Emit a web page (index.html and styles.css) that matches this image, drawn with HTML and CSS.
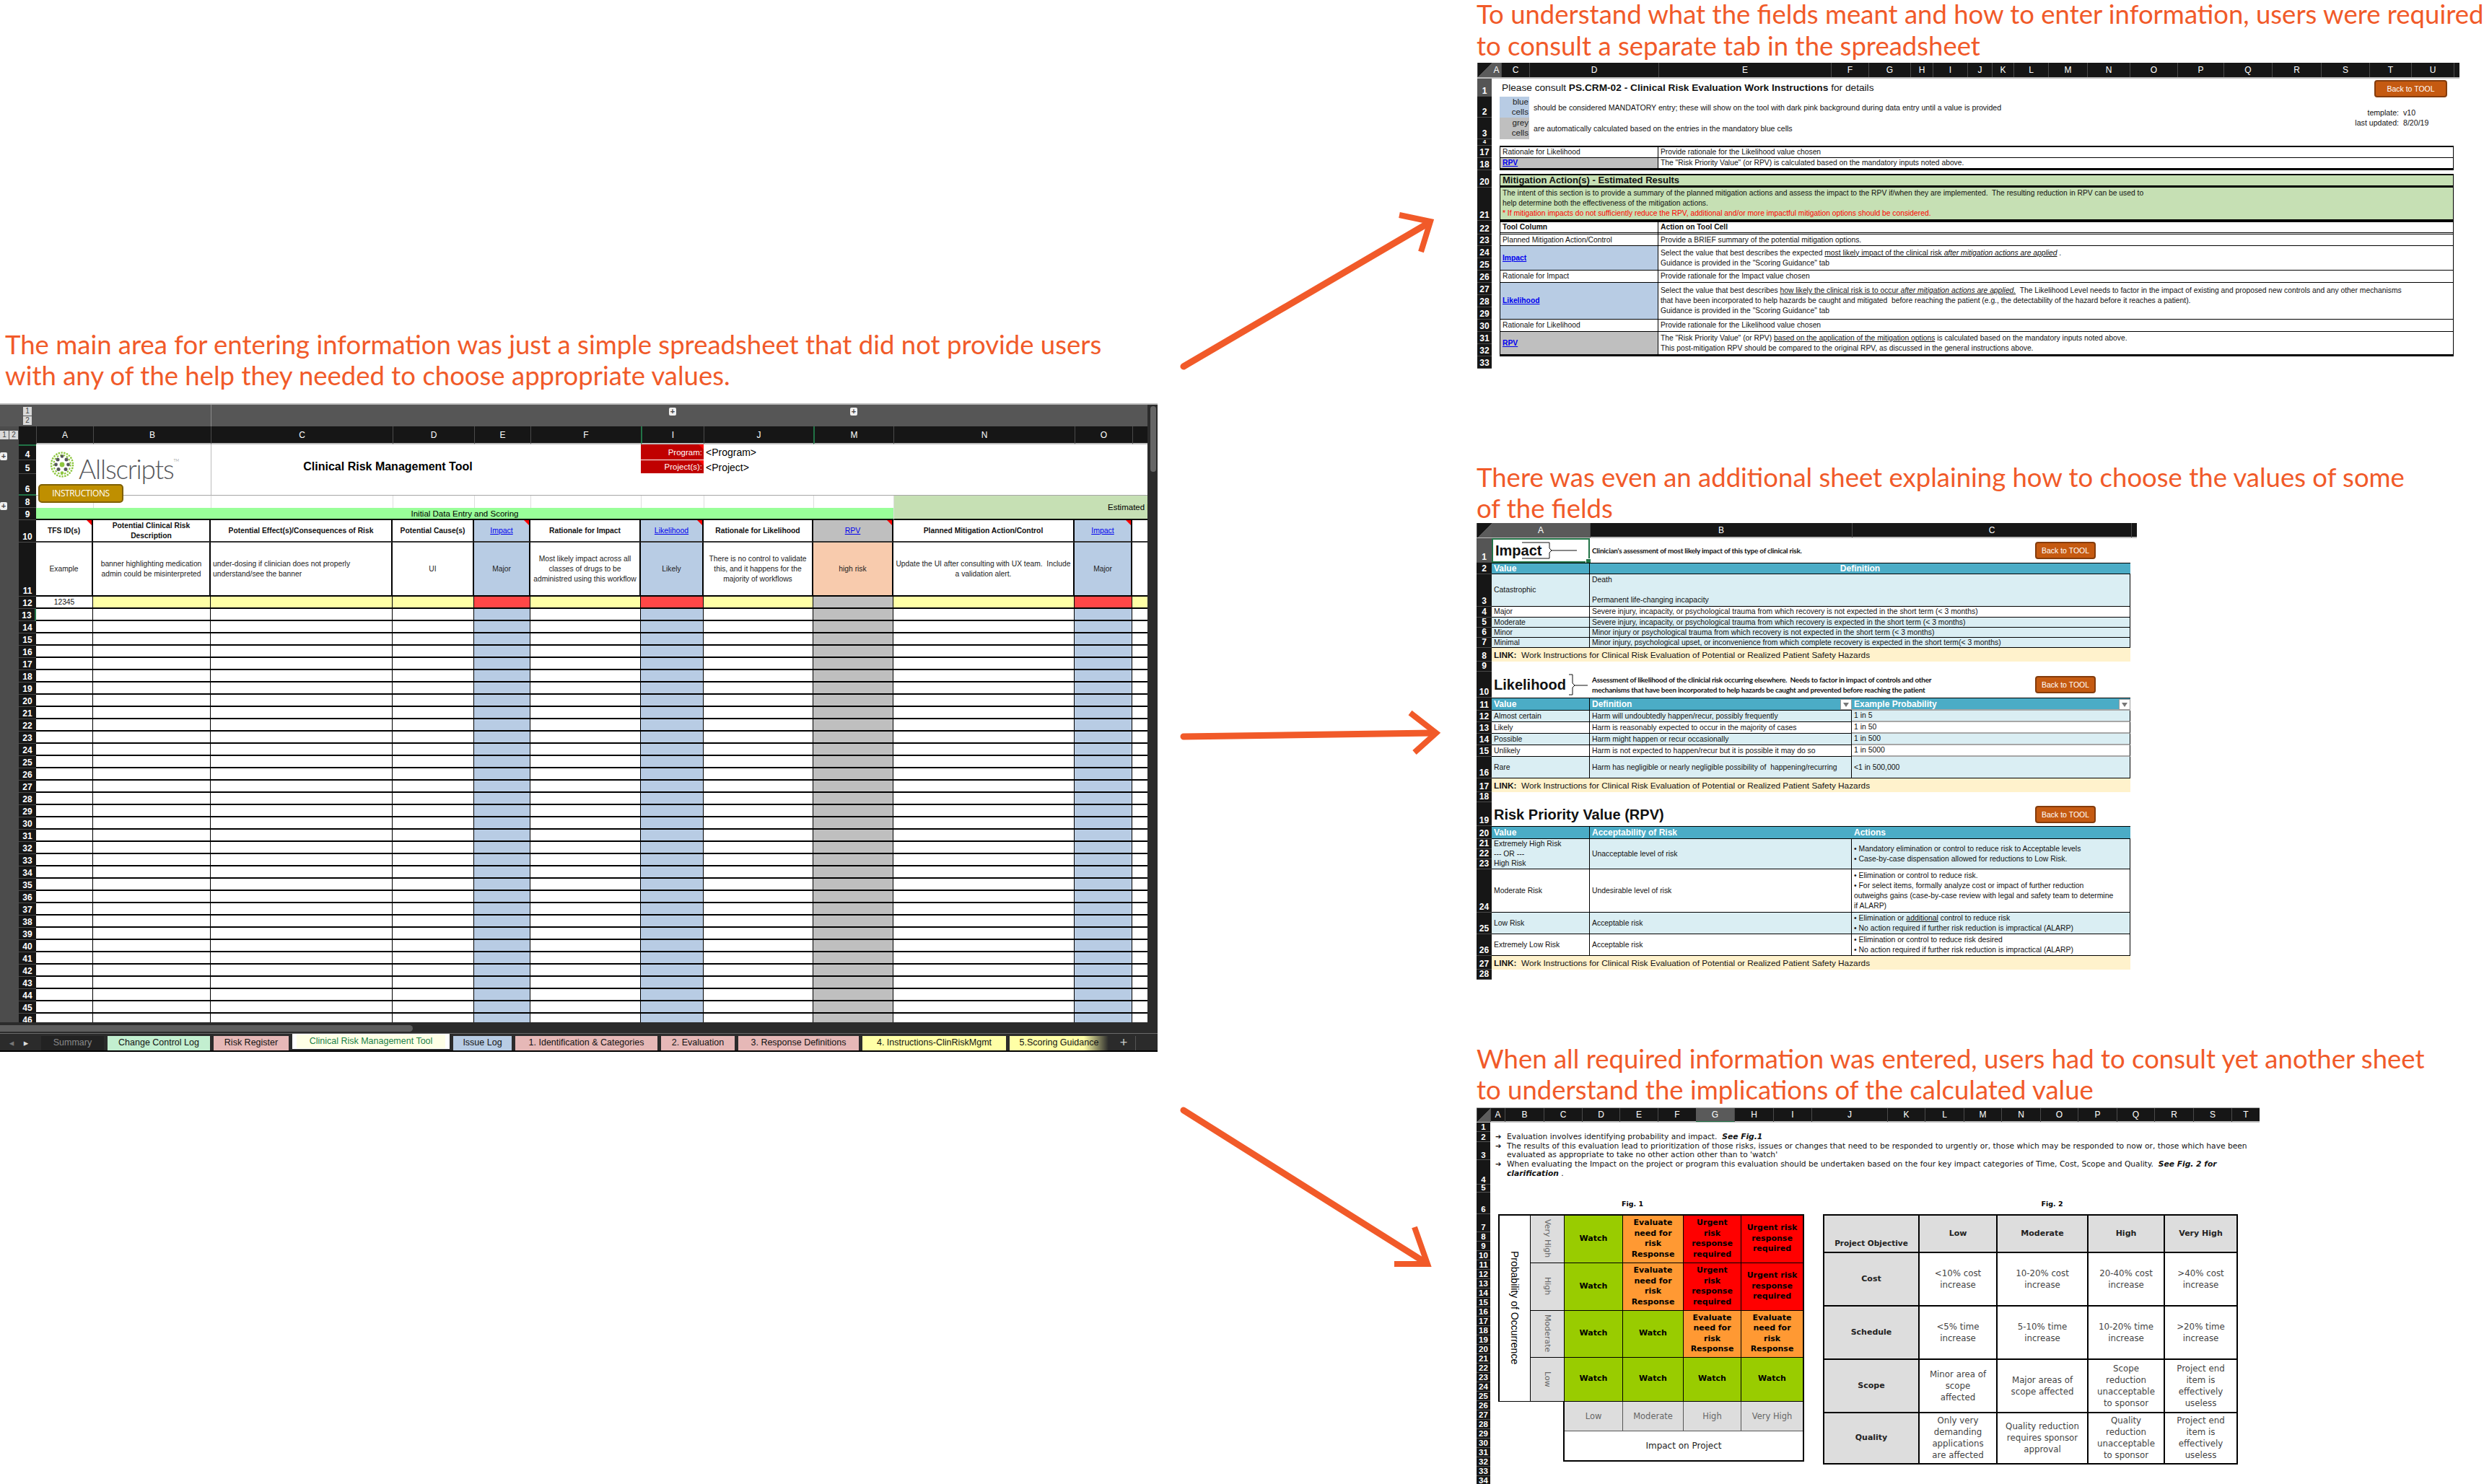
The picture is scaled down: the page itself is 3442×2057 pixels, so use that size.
FILE: index.html
```html
<!DOCTYPE html>
<html lang="en">
<head>
    <meta charset="UTF-8">
    <title>Clinical Risk Management Tool - spreadsheet review</title>
    <link rel="stylesheet" href="styles.css">
</head>
<body>
<div class="canvas">

    <p class="caption caption-main">The main area for entering information was just a simple spreadsheet that did not provide users<br>with any of the help they needed to choose appropriate values.</p>
    <p class="caption caption-work">To understand what the fields meant and how to enter information, users were required<br>to consult a separate tab in the spreadsheet</p>
    <p class="caption caption-impact">There was even an additional sheet explaining how to choose the values of some<br>of the fields</p>
    <p class="caption caption-eval">When all required information was entered, users had to consult yet another sheet<br>to understand the implications of the calculated value</p>

    <svg class="arrows" width="3442" height="2057" viewBox="0 0 3442 2057">
        <g fill="none" stroke="#f15a29">
            <path class="shaft" d="M1640 508 L1978 310"/>
            <path class="head" d="M1939 298 L1982 307 L1969 349"/>
            <path class="shaft" d="M1640 1021 L1985 1016"/>
            <path class="head" d="M1954 988 L1990 1016 L1960 1043"/>
            <path class="shaft" d="M1640 1539 L1972 1748"/>
            <path class="head" d="M1932 1752 L1978 1752 L1960 1701"/>
        </g>
    </svg>

    <!-- main entry sheet -->
    <div class="window">
        <div class="group-band">
            <div class="level-btns"><span>1</span><span>2</span></div>
            <span class="plus plus-i">+</span>
            <span class="plus plus-m">+</span>
        </div>
        <div class="vscroll"><span></span></div>
        <div class="window-body">
            <div class="outline">
                <div class="level-row"><span>1</span><span>2</span></div>
                <span class="plus plus-4">+</span>
                <span class="plus plus-8">+</span>
            </div>
            <div class="sheet-clip">
                <table class="xl main">
                    <colgroup>
                        <col class="m-num"><col class="m-a"><col class="m-b"><col class="m-c"><col class="m-d">
                        <col class="m-e blue"><col class="m-f"><col class="m-i blue"><col class="m-j">
                        <col class="m-m grey"><col class="m-n"><col class="m-o blue"><col class="m-p">
                    </colgroup>
                    <tr class="letters">
                        <th class="corner"></th><th>A</th><th>B</th><th>C</th><th>D</th><th>E</th><th>F</th>
                        <th class="hidden-before">I</th><th>J</th><th class="hidden-before">M</th><th>N</th><th>O</th><th></th>
                    </tr>
                    <tr class="r22 top">
                        <th class="green-top">4</th>
                        <td colspan="2" rowspan="3" class="logo-cell">
                            <div class="logo">
                                <svg width="34" height="36" viewBox="0 0 34 36">
                                    <g fill="none" stroke="#8dc63f">
                                        <ellipse cx="17" cy="18" rx="15" ry="16.5" stroke-width="2.4" stroke-dasharray="2.4 1.4"/>
                                        <ellipse cx="17" cy="18" rx="11.6" ry="13.2" stroke-width="2" stroke-dasharray="2.6 2"/>
                                    </g>
                                    <g fill="#55565a">
                                        <circle cx="11" cy="11" r="2.5"/><circle cx="23" cy="11" r="2.5"/>
                                        <circle cx="17" cy="6.5" r="2.2"/><circle cx="8.5" cy="18" r="2.4"/>
                                        <circle cx="25.5" cy="18" r="2.4"/><circle cx="12" cy="24.5" r="2.5"/>
                                        <circle cx="22" cy="24.5" r="2.5"/>
                                    </g>
                                    <circle cx="17" cy="18" r="3.4" fill="#8dc63f"/>
                                    <circle cx="17" cy="29.5" r="2.2" fill="#8dc63f"/>
                                </svg>
                                <span class="logo-name">Allscripts<sup>TM</sup></span>
                            </div>
                            <a class="instructions">INSTRUCTIONS</a>
                        </td>
                        <td colspan="4" rowspan="3" class="title-cell">Clinical Risk Management Tool</td>
                        <td class="prog note">Program:</td>
                        <td colspan="5" class="prog-val">&lt;Program&gt;</td>
                    </tr>
                    <tr class="r19 top">
                        <th>5</th>
                        <td class="prog note">Project(s):</td>
                        <td colspan="5" class="prog-val">&lt;Project&gt;</td>
                    </tr>
                    <tr class="r30 top">
                        <th class="green-bottom">6</th>
                        <td colspan="6" class="rule-bottom"></td>
                    </tr>
                    <tr class="top faint">
                        <th>8</th><td></td><td></td><td></td><td></td><td></td><td></td><td></td><td></td><td></td>
                        <td colspan="3" rowspan="2" class="estimated">Estimated Residual Risk Scoring</td>
                    </tr>
                    <tr class="top">
                        <th>9</th>
                        <td colspan="9" class="section">Initial Data Entry and Scoring</td>
                    </tr>
                    <tr class="r31 heads">
                        <th>10</th>
                        <td class="note">TFS ID(s)</td>
                        <td>Potential Clinical Risk Description</td>
                        <td>Potential Effect(s)/Consequences of Risk</td>
                        <td>Potential Cause(s)</td>
                        <td class="note"><a>Impact</a></td>
                        <td>Rationale for Impact</td>
                        <td class="note"><a>Likelihood</a></td>
                        <td>Rationale for Likelihood</td>
                        <td class="note"><a>RPV</a></td>
                        <td>Planned Mitigation Action/Control</td>
                        <td class="note"><a>Impact</a></td>
                        <td></td>
                    </tr>
                    <tr class="r75 example">
                        <th>11</th>
                        <td>Example</td>
                        <td>banner highlighting medication admin could be misinterpreted</td>
                        <td class="left">under-dosing if clinician does not properly<br>understand/see the banner</td>
                        <td>UI</td>
                        <td>Major</td>
                        <td>Most likely impact across all classes of drugs to be administred using this workflow</td>
                        <td>Likely</td>
                        <td>There is no control to validate this, and it happens for the majority of workflows</td>
                        <td class="peach">high risk</td>
                        <td>Update the UI after consulting with UX team.&nbsp; Include a validation alert.</td>
                        <td>Major</td>
                        <td>If it is still<br>likely to be<br>occurring</td>
                    </tr>
                    <tr class="entry">
                        <th>12</th>
                        <td class="plain">12345</td>
                        <td></td><td></td><td></td><td class="missing"></td><td></td><td class="missing"></td>
                        <td></td><td class="auto"></td><td></td><td class="missing"></td><td></td>
                    </tr>
                    <tr class="blank"><th class="green-right">13</th><td></td><td></td><td></td><td></td><td></td><td></td><td></td><td></td><td></td><td></td><td></td><td></td></tr>
                    <tr class="blank"><th>14</th><td></td><td></td><td></td><td></td><td></td><td></td><td></td><td></td><td></td><td></td><td></td><td></td></tr>
                    <tr class="blank"><th>15</th><td></td><td></td><td></td><td></td><td></td><td></td><td></td><td></td><td></td><td></td><td></td><td></td></tr>
                    <tr class="blank"><th>16</th><td></td><td></td><td></td><td></td><td></td><td></td><td></td><td></td><td></td><td></td><td></td><td></td></tr>
                    <tr class="blank"><th>17</th><td></td><td></td><td></td><td></td><td></td><td></td><td></td><td></td><td></td><td></td><td></td><td></td></tr>
                    <tr class="blank"><th>18</th><td></td><td></td><td></td><td></td><td></td><td></td><td></td><td></td><td></td><td></td><td></td><td></td></tr>
                    <tr class="blank"><th>19</th><td></td><td></td><td></td><td></td><td></td><td></td><td></td><td></td><td></td><td></td><td></td><td></td></tr>
                    <tr class="blank"><th>20</th><td></td><td></td><td></td><td></td><td></td><td></td><td></td><td></td><td></td><td></td><td></td><td></td></tr>
                    <tr class="blank"><th>21</th><td></td><td></td><td></td><td></td><td></td><td></td><td></td><td></td><td></td><td></td><td></td><td></td></tr>
                    <tr class="blank"><th>22</th><td></td><td></td><td></td><td></td><td></td><td></td><td></td><td></td><td></td><td></td><td></td><td></td></tr>
                    <tr class="blank"><th>23</th><td></td><td></td><td></td><td></td><td></td><td></td><td></td><td></td><td></td><td></td><td></td><td></td></tr>
                    <tr class="blank"><th>24</th><td></td><td></td><td></td><td></td><td></td><td></td><td></td><td></td><td></td><td></td><td></td><td></td></tr>
                    <tr class="blank"><th>25</th><td></td><td></td><td></td><td></td><td></td><td></td><td></td><td></td><td></td><td></td><td></td><td></td></tr>
                    <tr class="blank"><th>26</th><td></td><td></td><td></td><td></td><td></td><td></td><td></td><td></td><td></td><td></td><td></td><td></td></tr>
                    <tr class="blank"><th>27</th><td></td><td></td><td></td><td></td><td></td><td></td><td></td><td></td><td></td><td></td><td></td><td></td></tr>
                    <tr class="blank"><th>28</th><td></td><td></td><td></td><td></td><td></td><td></td><td></td><td></td><td></td><td></td><td></td><td></td></tr>
                    <tr class="blank"><th>29</th><td></td><td></td><td></td><td></td><td></td><td></td><td></td><td></td><td></td><td></td><td></td><td></td></tr>
                    <tr class="blank"><th>30</th><td></td><td></td><td></td><td></td><td></td><td></td><td></td><td></td><td></td><td></td><td></td><td></td></tr>
                    <tr class="blank"><th>31</th><td></td><td></td><td></td><td></td><td></td><td></td><td></td><td></td><td></td><td></td><td></td><td></td></tr>
                    <tr class="blank"><th>32</th><td></td><td></td><td></td><td></td><td></td><td></td><td></td><td></td><td></td><td></td><td></td><td></td></tr>
                    <tr class="blank"><th>33</th><td></td><td></td><td></td><td></td><td></td><td></td><td></td><td></td><td></td><td></td><td></td><td></td></tr>
                    <tr class="blank"><th>34</th><td></td><td></td><td></td><td></td><td></td><td></td><td></td><td></td><td></td><td></td><td></td><td></td></tr>
                    <tr class="blank"><th>35</th><td></td><td></td><td></td><td></td><td></td><td></td><td></td><td></td><td></td><td></td><td></td><td></td></tr>
                    <tr class="blank"><th>36</th><td></td><td></td><td></td><td></td><td></td><td></td><td></td><td></td><td></td><td></td><td></td><td></td></tr>
                    <tr class="blank"><th>37</th><td></td><td></td><td></td><td></td><td></td><td></td><td></td><td></td><td></td><td></td><td></td><td></td></tr>
                    <tr class="blank"><th>38</th><td></td><td></td><td></td><td></td><td></td><td></td><td></td><td></td><td></td><td></td><td></td><td></td></tr>
                    <tr class="blank"><th>39</th><td></td><td></td><td></td><td></td><td></td><td></td><td></td><td></td><td></td><td></td><td></td><td></td></tr>
                    <tr class="blank"><th>40</th><td></td><td></td><td></td><td></td><td></td><td></td><td></td><td></td><td></td><td></td><td></td><td></td></tr>
                    <tr class="blank"><th>41</th><td></td><td></td><td></td><td></td><td></td><td></td><td></td><td></td><td></td><td></td><td></td><td></td></tr>
                    <tr class="blank"><th>42</th><td></td><td></td><td></td><td></td><td></td><td></td><td></td><td></td><td></td><td></td><td></td><td></td></tr>
                    <tr class="blank"><th>43</th><td></td><td></td><td></td><td></td><td></td><td></td><td></td><td></td><td></td><td></td><td></td><td></td></tr>
                    <tr class="blank"><th>44</th><td></td><td></td><td></td><td></td><td></td><td></td><td></td><td></td><td></td><td></td><td></td><td></td></tr>
                    <tr class="blank"><th>45</th><td></td><td></td><td></td><td></td><td></td><td></td><td></td><td></td><td></td><td></td><td></td><td></td></tr>
                    <tr class="blank"><th>46</th><td></td><td></td><td></td><td></td><td></td><td></td><td></td><td></td><td></td><td></td><td></td><td></td></tr>
                </table>
            </div>
        </div>
        <div class="hscroll"><span></span></div>
        <div class="tabs">
            <div class="tab-nav"><span>&#9666;</span><span class="on">&#9656;</span></div>
            <div class="tab tab-off">Summary</div>
            <div class="tab tab-mint">Change Control Log</div>
            <div class="tab tab-rose">Risk Register</div>
            <div class="tab tab-active"><span>Clinical Risk Management Tool</span></div>
            <div class="tab tab-blue">Issue Log</div>
            <div class="tab tab-rose">1. Identification &amp; Categories</div>
            <div class="tab tab-rose">2. Evaluation</div>
            <div class="tab tab-rose">3. Response Definitions</div>
            <div class="tab tab-lemon">4. Instructions-ClinRiskMgmt</div>
            <div class="tab tab-lemon tab-fade">5.Scoring Guidance</div>
            <div class="tab-add">+</div>
        </div>
    </div>

    <!-- work instructions sheet -->
    <div class="panel panel-work">
        <div class="col-heads heads-work">
            <span class="corner"></span><span class="sel">A</span><span>C</span><span>D</span><span>E</span><span>F</span><span>G</span><span>H</span><span>I</span><span>J</span><span>K</span><span>L</span><span>M</span><span>N</span><span>O</span><span>P</span><span>Q</span><span>R</span><span>S</span><span>T</span><span>U</span><span></span>
        </div>
        <table class="xl work">
            <colgroup><col class="w-num"><col class="w-a"><col class="w-left"><col class="w-right"></colgroup>
            <tr class="r25">
                <th class="sel">1</th><td></td>
                <td colspan="2" class="consult">
                    <div class="between">
                        <span>Please consult <b>PS.CRM-02 - Clinical Risk Evaluation Work Instructions</b> for details</span>
                        <a class="back-btn back-work">Back to TOOL</a>
                    </div>
                </td>
            </tr>
            <tr class="r29">
                <th>2</th><td></td>
                <td colspan="2">
                    <div class="legend">
                        <span class="chip chip-blue">blue<br>cells</span>
                        <span>should be considered MANDATORY entry; these will show on the tool with dark pink background during data entry until a value is provided</span>
                        <span class="tmpl tmpl-a"><i>template:</i><i>v10</i></span>
                    </div>
                </td>
            </tr>
            <tr class="r30">
                <th>3</th><td></td>
                <td colspan="2">
                    <div class="legend">
                        <span class="chip chip-grey">grey<br>cells</span>
                        <span>are automatically calculated based on the entries in the mandatory blue cells</span>
                        <span class="tmpl tmpl-b"><i>last updated:</i><i>8/20/19</i></span>
                    </div>
                </td>
            </tr>
            <tr class="r9 small-num"><th>4</th><td></td><td colspan="2"></td></tr>
            <tr class="r16 boxed first"><th>17</th><td class="bare"></td><td>Rationale for Likelihood</td><td>Provide rationale for the Likelihood value chosen</td></tr>
            <tr class="r17 boxed last"><th>18</th><td class="bare"></td><td class="cell-grey"><a><b>RPV</b></a></td><td>The "Risk Priority Value" (or RPV) is calculated based on the mandatory inputs noted above.</td></tr>
            <tr class="r5"><th></th><td></td><td colspan="2"></td></tr>
            <tr class="r19 boxed first last"><th>20</th><td class="bare"></td><td colspan="2" class="sec-head">Mitigation Action(s) - Estimated Results</td></tr>
            <tr class="r46 boxed">
                <th>21</th><td class="bare"></td>
                <td colspan="2" class="sec-body">The intent of this section is to provide a summary of the planned mitigation actions and assess the impact to the RPV if/when they are implemented.&nbsp; The resulting reduction in RPV can be used to<br>help determine both the effectiveness of the mitigation actions.<br><span class="warn">* If mitigation impacts do not sufficiently reduce the RPV, additional and/or more impactful mitigation options should be considered.</span></td>
            </tr>
            <tr class="r16 boxed first double"><th>22</th><td class="bare"></td><td><b>Tool Column</b></td><td><b>Action on Tool Cell</b></td></tr>
            <tr class="r16 boxed"><th>23</th><td class="bare"></td><td>Planned Mitigation Action/Control</td><td>Provide a BRIEF summary of the potential mitigation options.</td></tr>
            <tr class="r17 boxed"><th>24</th><td class="bare"></td><td rowspan="2" class="cell-blue"><a><b>Impact</b></a></td><td rowspan="2">Select the value that best describes the expected <u>most likely impact of the clinical risk <em>after mitigation actions are applied</em></u> .<br>Guidance is provided in the "Scoring Guidance" tab</td></tr>
            <tr class="r17"><th>25</th><td class="bare"></td></tr>
            <tr class="r17 boxed"><th>26</th><td class="bare"></td><td>Rationale for Impact</td><td>Provide rationale for the Impact value chosen</td></tr>
            <tr class="r17 boxed"><th>27</th><td class="bare"></td><td rowspan="3" class="cell-blue"><a><b>Likelihood</b></a></td><td rowspan="3">Select the value that best describes <u>how likely the clinical risk is to occur <em>after mitigation actions are applied.</em></u>&nbsp; The Likelihood Level needs to factor in the impact of existing and proposed new controls and any other mechanisms<br>that have been incorporated to help hazards be caught and mitigated&nbsp; before reaching the patient (e.g., the detectability of the hazard before it reaches a patient).<br>Guidance is provided in the "Scoring Guidance" tab</td></tr>
            <tr class="r17"><th>28</th><td class="bare"></td></tr>
            <tr class="r17"><th>29</th><td class="bare"></td></tr>
            <tr class="r17 boxed"><th>30</th><td class="bare"></td><td>Rationale for Likelihood</td><td>Provide rationale for the Likelihood value chosen</td></tr>
            <tr class="r17 boxed last"><th>31</th><td class="bare"></td><td rowspan="2" class="cell-grey"><a><b>RPV</b></a></td><td rowspan="2">The "Risk Priority Value" (or RPV) <u>based on the application of the mitigation options</u> is calculated based on the mandatory inputs noted above.<br>This post-mitigation RPV should be compared to the original RPV, as discussed in the general instructions above.</td></tr>
            <tr class="r17"><th>32</th><td class="bare"></td></tr>
            <tr class="r17"><th>33</th><td></td><td colspan="2"></td></tr>
        </table>
    </div>

    <!-- scoring guidance sheet -->
    <div class="panel panel-impact">
        <div class="col-heads heads-impact">
            <span class="corner"></span><span class="sel">A</span><span>B</span><span>C</span><span></span>
        </div>
        <table class="xl impact">
            <colgroup><col class="i-num"><col class="i-a"><col class="i-b"><col class="i-c"></colgroup>
            <tr class="r34 open">
                <th class="sel">1</th>
                <td class="picked">
                    <div class="callout">
                        <span class="big">Impact</span>
                        <svg class="callout-impact" width="76" height="26" viewBox="0 0 76 26"><path d="M0 2 H38 V10 L41 13 H76 M41 13 L38 16 V24 H0" fill="none" stroke="#111" stroke-width="1"/></svg>
                    </div>
                </td>
                <td class="tight">Clinician's assessment of most likely impact of this type of clinical risk.</td>
                <td class="btn-cell"><a class="back-btn">Back to TOOL</a></td>
            </tr>
            <tr class="r16 teal"><th>2</th><td>Value</td><td colspan="2" class="center">Definition</td></tr>
            <tr class="r45 zebra"><th>3</th><td>Catastrophic</td><td colspan="2">Death<br><br>Permanent life-changing incapacity</td></tr>
            <tr class="r15 plain-row"><th>4</th><td>Major</td><td colspan="2">Severe injury, incapacity, or psychological trauma from which recovery is not expected in the short term (&lt; 3 months)</td></tr>
            <tr class="r14 zebra"><th>5</th><td>Moderate</td><td colspan="2">Severe injury, incapacity, or psychological trauma from which recovery is expected in the short term (&lt; 3 months)</td></tr>
            <tr class="r14 plain-row"><th>6</th><td>Minor</td><td colspan="2">Minor injury or psychological trauma from which recovery is not expected in the short term (&lt; 3 months)</td></tr>
            <tr class="r14 zebra"><th>7</th><td>Minimal</td><td colspan="2">Minor injury, psychological upset, or inconvenience from which complete recovery is expected in the short term(&lt; 3 months)</td></tr>
            <tr class="r19 link-row"><th>8</th><td colspan="3"><b>LINK:</b>&nbsp; Work Instructions for Clinical Risk Evaluation of Potential or Realized Patient Safety Hazards</td></tr>
            <tr class="r14 open"><th>9</th><td colspan="3"></td></tr>
            <tr class="r36 open">
                <th>10</th>
                <td>
                    <div class="callout">
                        <span class="big">Likelihood</span>
                        <svg width="26" height="30" viewBox="0 0 26 30"><path d="M0 1 H5 V13 L8 16 H26 M8 16 L5 19 V29 H0" fill="none" stroke="#111" stroke-width="1"/></svg>
                    </div>
                </td>
                <td class="tight">Assessment of likelihood of the clinicial risk occurring elsewhere.&nbsp; Needs to factor in impact of controls and other<br>mechanisms that have been incorporated to help hazards be caught and prevented before reaching the patient</td>
                <td class="btn-cell"><a class="back-btn">Back to TOOL</a></td>
            </tr>
            <tr class="r18 teal"><th>11</th><td>Value</td><td class="filtered">Definition<span class="filter"></span></td><td class="filtered soft">Example Probability<span class="filter"></span></td></tr>
            <tr class="r15 zebra"><th>12</th><td>Almost certain</td><td>Harm will undoubtedly happen/recur, possibly frequently</td><td class="soft">1 in 5</td></tr>
            <tr class="r16 plain-row"><th>13</th><td>Likely</td><td>Harm is reasonably expected to occur in the majority of cases</td><td class="soft">1 in 50</td></tr>
            <tr class="r16 zebra"><th>14</th><td>Possible</td><td>Harm might happen or recur occasionally</td><td class="soft">1 in 500</td></tr>
            <tr class="r15 plain-row"><th>15</th><td>Unlikely</td><td>Harm is not expected to happen/recur but it is possible it may do so</td><td class="soft">1 in 5000</td></tr>
            <tr class="r30 zebra"><th>16</th><td>Rare</td><td>Harm has negligible or nearly negligible possibility of&nbsp; happening/recurring</td><td>&lt;1 in 500,000</td></tr>
            <tr class="r19 link-row"><th>17</th><td colspan="3"><b>LINK:</b>&nbsp; Work Instructions for Clinical Risk Evaluation of Potential or Realized Patient Safety Hazards</td></tr>
            <tr class="r14 open"><th>18</th><td colspan="3"></td></tr>
            <tr class="r33 open">
                <th>19</th>
                <td colspan="2"><span class="big">Risk Priority Value (RPV)</span></td>
                <td class="btn-cell"><a class="back-btn">Back to TOOL</a></td>
            </tr>
            <tr class="r18 teal"><th>20</th><td>Value</td><td>Acceptability of Risk</td><td>Actions</td></tr>
            <tr class="r14 zebra"><th>21</th><td rowspan="3">Extremely High Risk<br>--- OR ---<br>High Risk</td><td rowspan="3">Unacceptable level of risk</td><td rowspan="3">&bull; Mandatory elimination or control to reduce risk to Acceptable levels<br>&bull; Case-by-case dispensation allowed for reductions to Low Risk.</td></tr>
            <tr class="r14"><th>22</th></tr>
            <tr class="r14"><th>23</th></tr>
            <tr class="r60 plain-row"><th>24</th><td>Moderate Risk</td><td>Undesirable level of risk</td><td>&bull; Elimination or control to reduce risk.<br>&bull; For select items, formally analyze cost or impact of further reduction<br>outweighs gains (case-by-case review with legal and safety team to determine<br>if ALARP)</td></tr>
            <tr class="r30 zebra"><th>25</th><td>Low Risk</td><td>Acceptable risk</td><td>&bull; Elimination or <u>additional</u> control to reduce risk<br>&bull; No action required if further risk reduction is impractical (ALARP)</td></tr>
            <tr class="r30 plain-row"><th>26</th><td>Extremely Low Risk</td><td>Acceptable risk</td><td>&bull; Elimination or control to reduce risk desired<br>&bull; No action required if further risk reduction is impractical (ALARP)</td></tr>
            <tr class="r19 link-row"><th>27</th><td colspan="3"><b>LINK:</b>&nbsp; Work Instructions for Clinical Risk Evaluation of Potential or Realized Patient Safety Hazards</td></tr>
            <tr class="r14 open"><th>28</th><td colspan="3"></td></tr>
        </table>
    </div>

    <!-- evaluation sheet -->
    <div class="panel panel-eval">
        <div class="col-heads heads-eval">
            <span class="corner"></span><span>A</span><span>B</span><span>C</span><span>D</span><span>E</span><span>F</span><span class="sel">G</span><span>H</span><span>I</span><span>J</span><span>K</span><span>L</span><span>M</span><span>N</span><span>O</span><span>P</span><span>Q</span><span>R</span><span>S</span><span>T</span>
        </div>
        <div class="eval-body">
            <div class="eval-nums">
                <span class="n13">1</span><span class="n14">2</span><span class="n25">3</span><span class="n34">4</span><span class="n11">5</span><span class="n30">6</span><span class="n25">7</span>
                <span>8</span><span>9</span><span>10</span><span>11</span><span>12</span><span>13</span><span>14</span><span>15</span><span>16</span><span>17</span><span>18</span><span>19</span><span>20</span><span>21</span><span>22</span><span>23</span><span>24</span><span>25</span><span>26</span><span>27</span><span>28</span><span>29</span><span>30</span><span>31</span><span>32</span><span>33</span><span>34</span>
            </div>
            <div class="eval-content">
                <ul class="bullets">
                    <li>Evaluation involves identifying probability and impact.&nbsp; <b><em>See Fig.1</em></b></li>
                    <li>The results of this evaluation lead to prioritization of those risks, issues or changes that need to be responded to urgently or, those which may be responded to now or, those which have been<br>evaluated as appropriate to take no other action other than to 'watch'</li>
                    <li>When evaluating the Impact on the project or program this evaluation should be undertaken based on the four key impact categories of Time, Cost, Scope and Quality.&nbsp; <b><em>See Fig. 2 for<br>clarification</em></b> .</li>
                </ul>
                <div class="figures">
                    <div class="figure">
                        <div class="fig-title fig-title-1">Fig. 1</div>
                        <div class="risk-top">
                            <div class="prob-side"><span>Probability of Occurrence</span></div>
                            <div class="prob-label"><span>Very High</span></div>
                            <div class="cell-watch">Watch</div>
                            <div class="cell-eval">Evaluate need for risk Response</div>
                            <div class="cell-urgent">Urgent<br>risk<br>response<br>required</div>
                            <div class="cell-urgent">Urgent risk<br>response<br>required</div>
                            <div class="prob-label"><span>High</span></div>
                            <div class="cell-watch">Watch</div>
                            <div class="cell-eval">Evaluate need for risk Response</div>
                            <div class="cell-urgent">Urgent<br>risk<br>response<br>required</div>
                            <div class="cell-urgent">Urgent risk<br>response<br>required</div>
                            <div class="prob-label"><span>Moderate</span></div>
                            <div class="cell-watch">Watch</div>
                            <div class="cell-watch">Watch</div>
                            <div class="cell-eval">Evaluate need for risk Response</div>
                            <div class="cell-eval">Evaluate need for risk Response</div>
                            <div class="prob-label"><span>Low</span></div>
                            <div class="cell-watch">Watch</div>
                            <div class="cell-watch">Watch</div>
                            <div class="cell-watch">Watch</div>
                            <div class="cell-watch">Watch</div>
                        </div>
                        <div class="risk-bottom">
                            <div>Low</div><div>Moderate</div><div>High</div><div>Very High</div>
                            <div class="impact-axis">Impact on Project</div>
                        </div>
                    </div>
                    <div class="figure">
                        <div class="fig-title fig-title-2">Fig. 2</div>
                        <div class="objectives">
                            <div class="obj-corner">Project Objective</div>
                            <div class="obj-head">Low</div><div class="obj-head">Moderate</div><div class="obj-head">High</div><div class="obj-head">Very High</div>
                            <div class="obj-name">Cost</div>
                            <div>&lt;10% cost<br>increase</div><div>10-20% cost<br>increase</div><div>20-40% cost<br>increase</div><div>&gt;40% cost<br>increase</div>
                            <div class="obj-name">Schedule</div>
                            <div>&lt;5% time<br>increase</div><div>5-10% time<br>increase</div><div>10-20% time<br>increase</div><div>&gt;20% time<br>increase</div>
                            <div class="obj-name">Scope</div>
                            <div>Minor area of<br>scope<br>affected</div><div>Major areas of<br>scope affected</div><div>Scope<br>reduction<br>unacceptable<br>to sponsor</div><div>Project end<br>item is<br>effectively<br>useless</div>
                            <div class="obj-name">Quality</div>
                            <div>Only very<br>demanding<br>applications<br>are affected</div><div>Quality reduction<br>requires sponsor<br>approval</div><div>Quality<br>reduction<br>unacceptable<br>to sponsor</div><div>Project end<br>item is<br>effectively<br>useless</div>
                        </div>
                    </div>
                </div>
            </div>
        </div>
    </div>

</div>
</body>
</html>
```

FILE: styles.css
```css
* {
    box-sizing: border-box;
    margin: 0;
    padding: 0;
}

body {
    background: #fff;
    font-family: "Liberation Sans", Arial, sans-serif;
}

.canvas {
    position: relative;
    width: 3442px;
    height: 2057px;
    overflow: hidden;
}

/* captions and arrows */
.caption {
    position: absolute;
    font-family: Lato, "Open Sans", sans-serif;
    font-size: 36.5px;
    line-height: 43px;
    color: #f15a29;
    white-space: nowrap;
}

.caption-main { left: 7px; top: 456px; }
.caption-work { left: 2046px; top: -3px; line-height: 44px; }
.caption-impact { left: 2046px; top: 640px; }
.caption-eval { left: 2046px; top: 1446px; }

.arrows {
    position: absolute;
    left: 0;
    top: 0;
}

.shaft {
    stroke-width: 9;
    stroke-linecap: round;
}

.head {
    stroke-width: 8;
    stroke-linejoin: miter;
}

/* shared spreadsheet table */
.xl {
    border-collapse: separate;
    border-spacing: 0;
    table-layout: fixed;
    font-size: 10.3px;
    line-height: 14px;
    color: #111;
}

.xl td,
.xl th {
    padding: 0;
    height: 17px;
    vertical-align: middle;
}

.xl th {
    background: #161616;
    color: #fff;
    font-size: 12px;
    font-weight: 700;
    line-height: 13px;
    text-align: center;
    vertical-align: bottom;
    border-bottom: 1px solid #4a4a4a;
    overflow: hidden;
}

.xl th.sel { background: #555; }

.xl a {
    color: #0000ee;
    text-decoration: underline;
}

.r5 td, .r5 th { height: 5px; font-size: 0; line-height: 0; border-bottom: 0; }
.r9 td, .r9 th { height: 9px; }
.r14 td, .r14 th { height: 14px; }
.r15 td, .r15 th { height: 15px; }
.r16 td, .r16 th { height: 16px; }
.r17 td, .r17 th { height: 17px; }
.r18 td, .r18 th { height: 18px; }
.r19 td, .r19 th { height: 19px; }
.r22 td, .r22 th { height: 22px; }
.r25 td, .r25 th { height: 25px; }
.r29 td, .r29 th { height: 29px; }
.r30 td, .r30 th { height: 30px; }
.r31 td, .r31 th { height: 31px; }
.r33 td, .r33 th { height: 33px; }
.r34 td, .r34 th { height: 34px; }
.r36 td, .r36 th { height: 36px; }
.r45 td, .r45 th { height: 45px; }
.r46 td, .r46 th { height: 46px; }
.r60 td, .r60 th { height: 60px; }
.r75 td, .r75 th { height: 75px; }

.small-num th { font-size: 8px; line-height: 8px; }

.panel {
    position: absolute;
}

.col-heads {
    display: grid;
    height: 22px;
    background: #161616;
    border-bottom: 2px solid #bdbdbd;
    color: #fff;
    font-size: 12px;
    line-height: 20px;
    text-align: center;
}

.col-heads span {
    border-left: 1px solid #4a4a4a;
}

.col-heads .sel {
    background: #5a5a5a;
    border-left: 0;
}

.corner {
    background: linear-gradient(135deg, #161616 50%, #5c5c5c 50%);
}

/* main window */
.window {
    position: absolute;
    left: 0;
    top: 559px;
    width: 1604px;
    height: 899px;
    background: #2b2b2b;
    border-top: 2px solid #bcbcbc;
    border-bottom: 2px solid #000;
    display: flex;
    flex-direction: column;
}

.group-band {
    position: relative;
    height: 30px;
    background: #565656;
    flex: none;
    background-image: linear-gradient(#8a8a8a, #8a8a8a);
    background-size: 1px 30px;
    background-position: 292px 0;
    background-repeat: no-repeat;
}

.level-btns {
    position: absolute;
    left: 32px;
    top: 3px;
    display: flex;
    flex-direction: column;
    gap: 1px;
}

.level-btns span,
.level-row span {
    display: block;
    width: 12px;
    height: 12px;
    background: #d9d9d9;
    color: #444;
    font-size: 10px;
    line-height: 12px;
    text-align: center;
}

.plus {
    position: absolute;
    width: 10px;
    height: 11px;
    background: #efefef;
    border-radius: 2px;
    color: #444;
    font-size: 11px;
    font-weight: 700;
    line-height: 10px;
    text-align: center;
}

.plus-i { left: 927px; top: 4px; }
.plus-m { left: 1178px; top: 4px; }

.vscroll {
    position: absolute;
    right: 0;
    top: 0;
    width: 14px;
    height: 856px;
    background: #2b2b2b;
}

.vscroll span {
    position: absolute;
    left: 4px;
    top: 2px;
    width: 8px;
    height: 91px;
    background: #666;
    border-radius: 4px;
}

.window-body {
    display: flex;
    height: 826px;
    flex: none;
}

.outline {
    position: relative;
    width: 26px;
    background: #4c4c4c;
    flex: none;
}

.level-row {
    position: absolute;
    left: 0;
    top: 6px;
    display: flex;
    gap: 1px;
}

.plus-4 { left: 0; top: 36px; }
.plus-8 { left: 0; top: 105px; }

.sheet-clip {
    width: 1564px;
    height: 826px;
    overflow: hidden;
    background: #fff;
}

.main {
    width: 1644px;
}

.m-num { width: 24px; }
.m-a { width: 79px; }
.m-b { width: 163px; }
.m-c { width: 252px; }
.m-d { width: 113px; }
.m-e { width: 78px; }
.m-f { width: 153px; }
.m-i { width: 87px; }
.m-j { width: 152px; }
.m-m { width: 111px; }
.m-n { width: 251px; }
.m-o { width: 80px; }
.m-p { width: 101px; }

.letters th {
    height: 25px;
    font-weight: 400;
    line-height: 22px;
    vertical-align: middle;
    border-left: 1px solid #4a4a4a;
    border-bottom: 2px solid #bdbdbd;
}

.letters th.corner {
    border-left: 0;
    border-bottom-color: #161616;
}

.letters .hidden-before {
    border-left: 2px solid #217346;
}

.green-top { border-top: 2px solid #217346; }
.xl th.green-bottom { border-bottom: 2px solid #217346; }
.green-right { border-right: 2px solid #217346; }

.top td {
    background: #fff;
    color: #000;
    vertical-align: middle;
}

.logo-cell {
    position: relative;
    vertical-align: top !important;
    border-bottom: 1px solid #a5a5a5;
}

.logo {
    display: flex;
    align-items: center;
    gap: 6px;
    margin: 10px 0 0 19px;
    height: 36px;
    color: #55565a;
}

.logo-name {
    font-family: Lato, "Open Sans", sans-serif;
    font-size: 37px;
    font-weight: 300;
    line-height: 36px;
    letter-spacing: -1.2px;
    white-space: nowrap;
}

.logo-name sup {
    font-size: 5px;
    letter-spacing: 0;
    vertical-align: 24px;
}

.instructions {
    position: absolute;
    left: 3px;
    top: 55px;
    z-index: 2;
    width: 118px;
    height: 26px;
    background: #bf8f00;
    border: 2px solid #7f6000;
    border-radius: 5px;
    color: #fff !important;
    font-family: "Open Sans", sans-serif;
    font-size: 12px;
    line-height: 22px;
    text-align: center;
    text-decoration: none !important;
    letter-spacing: -0.4px;
}

.title-cell {
    padding: 0 106px 8px 0 !important;
    border-bottom: 1px solid #a5a5a5;
    border-left: 1px solid #bcbcbc;
    font-size: 16px;
    font-weight: 700;
    text-align: center;
}

.prog {
    position: relative;
    background: #c00000 !important;
    border-bottom: 1px solid #fff;
    color: #fff !important;
    font-size: 11.5px;
    text-align: right;
    padding-right: 2px !important;
}

.prog-val {
    padding-left: 3px !important;
    font-size: 14px;
    white-space: nowrap;
}

.rule-bottom { border-bottom: 1px solid #a5a5a5; }

.faint td { border-left: 1px solid #ddd; }

.estimated {
    background: #c6e0b4 !important;
    border-bottom: 2px solid #000;
    font-size: 11.5px;
    padding-left: 296px !important;
    white-space: nowrap;
}

.section {
    background: #99ff99 !important;
    border-bottom: 2px solid #000;
    font-size: 11.5px;
    text-align: center;
}

.heads td {
    position: relative;
    padding: 0 4px;
    background: none;
    border-right: 2px solid #000;
    border-bottom: 2px solid #333;
    font-weight: 700;
    text-align: center;
}

.heads td:has(a) { font-weight: 400; }

.heads a { font-size: 10.5px; }

.example td {
    padding: 0 3px;
    border-right: 2px solid #000;
    border-bottom: 2px solid #000;
    text-align: center;
    color: #222;
}

.example td.left { text-align: left; }
.example td.peach { background: #f8cbad; }

.note::after {
    content: "";
    position: absolute;
    right: 0;
    top: 0;
    border-top: 7px solid #f00;
    border-left: 7px solid transparent;
}

.blue { background: #b8cce4; }
.grey { background: #bfbfbf; }

.entry td {
    background: #ffffa6;
    border-right: 1px solid #000;
    border-bottom: 2px solid #000;
}

.entry td.plain { background: #fff; text-align: center; }
.entry td.missing { background: #ff4747; }
.entry td.auto { background: #bfbfbf; }

.blank td {
    border-right: 1px solid #000;
    border-bottom: 2px solid #000;
}

.main col:not(.blue):not(.grey) { background: #fff; }

.hscroll {
    position: relative;
    height: 15px;
    flex: none;
}

.hscroll span {
    position: absolute;
    left: 0;
    top: 4px;
    width: 572px;
    height: 9px;
    background: #5e5e5e;
    border-radius: 0 5px 5px 0;
}

.tabs {
    flex: 1;
    display: grid;
    grid-template-columns: 52px 87px 142px 104px 218px 81px 197px 102px 167px 199px 137px 33px;
    gap: 5px;
    padding-top: 3px;
    border-top: 1px solid #6a6a6a;
    background: #2b2b2b;
    font-size: 12.5px;
    line-height: 19px;
    color: #111;
    text-align: center;
}

.tab { height: 20px; white-space: nowrap; overflow: hidden; }

.tab-nav {
    display: flex;
    justify-content: space-around;
    padding: 0 6px;
    color: #777;
    font-family: "DejaVu Sans", sans-serif;
    font-size: 13px;
}

.tab-nav .on { color: #ddd; }

.tab-off { background: #222; color: #8a8a8a; margin-left: 0; }
.tab-mint { background: #c3efd0; }
.tab-rose { background: #e6b8b7; }
.tab-blue { background: #b8cce4; }
.tab-lemon { background: #ffffa6; }
.tab-fade { background: linear-gradient(90deg, #ffffa6 75%, #2b2b2b 100%); }

.tab-active {
    height: 21px;
    margin-top: -3px;
    padding: 1px 6px 0;
    background: #fff;
    color: #1a7f46;
}

.tab-active span {
    display: block;
    background: #ffffe6;
}

.tab-add {
    color: #ccc;
    font-size: 18px;
    border-right: 1px solid #555;
}

/* buttons */
.back-btn {
    display: block;
    width: 84px;
    height: 24px;
    background: #c55a11;
    border: 2px solid #843c0c;
    border-radius: 4px;
    color: #fff !important;
    font-size: 10.5px;
    line-height: 20px;
    text-align: center;
    text-decoration: none !important;
    white-space: nowrap;
}

/* work instructions sheet */
.panel-work {
    left: 2047px;
    top: 87px;
    width: 1361px;
}

.heads-work {
    grid-template-columns: 20px 13px 39px 179px 239px 52px 58px 31px 48px 34px 30px 48px 54px 59px 66px 64px 67px 68px 67px 58px 59px 8px;
}

.work { width: 1353px; }
.w-num { width: 20px; }
.w-a { width: 11px; }
.w-left { width: 220px; }
.w-right { width: 1102px; }

.consult { font-size: 13.7px; padding-left: 3px !important; }

.between {
    display: flex;
    justify-content: space-between;
    align-items: center;
    height: 25px;
}

.back-work {
    width: 101px;
    margin: 3px 9px 0 0;
    position: relative;
    z-index: 1;
}

.legend {
    display: flex;
    align-items: center;
    gap: 6px;
    height: 100%;
    font-size: 10.6px;
    white-space: nowrap;
}

.chip {
    width: 41px;
    height: 29px;
    padding-right: 1px;
    color: #222;
    font-size: 11.6px;
    text-align: right;
}

.chip-blue { background: #b8cce4; }
.chip-grey { background: #bfbfbf; height: 30px; }

.tmpl {
    display: grid;
    grid-template-columns: 100px 50px;
    gap: 6px;
    margin-left: auto;
    margin-right: 20px;
}

.tmpl i { font-style: normal; }
.tmpl i:first-child { text-align: right; }
.tmpl-a { align-self: flex-end; }
.tmpl-b { align-self: flex-start; }

.boxed td:not(.bare) {
    padding: 0 3px;
    border-right: 1px solid #000;
    border-bottom: 1px solid #000;
}

.boxed td:nth-child(3) { border-left: 1px solid #000; }

.boxed td[colspan] { border-left: 1px solid #000; }

.first td:not(.bare) { border-top: 2px solid #000; }
.last td:not(.bare) { border-bottom: 3px solid #000; }
.double td:not(.bare) { border-bottom: 3px double #000; }

.cell-grey { background: #bfbfbf; }
.cell-blue { background: #b8cce4; }

.sec-head {
    background: #c6e0b4;
    font-size: 13px;
    font-weight: 700;
}

.sec-body {
    background: #c6e0b4;
    border-bottom: 2px solid #000 !important;
}

.warn { color: #f00; }

/* scoring guidance sheet */
.panel-impact {
    left: 2046px;
    top: 725px;
    width: 915px;
}

.heads-impact {
    grid-template-columns: 21px 136px 363px 387px 8px;
    height: 21px;
}

.impact { width: 906px; }
.i-num { width: 21px; }
.i-a { width: 136px; }
.i-b { width: 363px; }
.i-c { width: 386px; }

.impact td {
    padding: 0 3px;
    font-size: 10.4px;
    white-space: normal;
}

.impact .r14 td { line-height: 13px; }
.impact .r14 td[rowspan] { line-height: 13.6px; }

.big {
    font-size: 20px;
    font-weight: 700;
    line-height: 24px;
    white-space: nowrap;
}

.callout {
    display: flex;
    align-items: center;
    gap: 4px;
    white-space: nowrap;
}

.callout-impact {
    margin-left: -31px;
}

.picked {
    position: relative;
    border: 2px solid #217346;
}

.picked::after {
    content: "";
    position: absolute;
    right: -4px;
    bottom: -4px;
    width: 6px;
    height: 6px;
    background: #217346;
    border: 1px solid #fff;
}

/* this text is set tighter in the sheet than the cells around it */
.impact .tight {
    font-family: Lato, "Open Sans", sans-serif;
    font-size: 10px;
    font-weight: 700;
    letter-spacing: -0.25px;
    white-space: nowrap;
}

.impact .btn-cell {
    padding-left: 254px;
    vertical-align: middle;
}

.impact .teal td {
    position: relative;
    background: #4bacc6;
    border-top: 1px solid #000;
    border-bottom: 1px solid #000;
    color: #fff;
    font-size: 12px;
    font-weight: 700;
}

.impact .teal td:nth-child(2) { border-right: 1px solid #000; }

.center { text-align: center; }

.filter {
    position: absolute;
    right: 0;
    top: 1px;
    width: 16px;
    height: 15px;
    background: #fff;
    border: 1px solid #999;
}

.filter::after {
    content: "";
    position: absolute;
    left: 3px;
    top: 4px;
    border-top: 6px solid #777;
    border-left: 4px solid transparent;
    border-right: 4px solid transparent;
}

.zebra td,
.zebra + .r14 td { background: #daeef3; }

.zebra td,
.plain-row td {
    border-right: 1px solid #000;
    border-bottom: 1px solid #000;
}

.impact td.soft {
    border-bottom: 2px solid #a6a6a6;
}

.impact .link-row td {
    background: #fff2cc;
    font-size: 11.8px;
    white-space: nowrap;
}

/* evaluation sheet */
.panel-eval {
    left: 2046px;
    top: 1535px;
    width: 1085px;
}

.heads-eval {
    grid-template-columns: 19px 20px 54px 53px 52px 53px 53px 53px 54px 53px 105px 52px 54px 52px 54px 52px 54px 52px 54px 53px 39px;
    height: 21px;
    border-top: 1px solid #aaa;
    line-height: 18px;
}

.heads-eval .sel { border-bottom: 1px solid #217346; }

.eval-body {
    display: flex;
}

.eval-nums {
    display: flex;
    flex-direction: column;
    width: 19px;
    flex: none;
    background: #161616;
    color: #fff;
    font-size: 11.5px;
    font-weight: 700;
    line-height: 12px;
    text-align: center;
}

.eval-nums span {
    display: flex;
    align-items: flex-end;
    justify-content: center;
    height: 13px;
    border-bottom: 1px solid #555;
    flex: none;
}

.eval-nums .n11 { height: 11px; }
.eval-nums .n13 { height: 13px; }
.eval-nums .n14 { height: 14px; }
.eval-nums .n25 { height: 25px; }
.eval-nums .n30 { height: 30px; }
.eval-nums .n34 { height: 34px; }

.eval-content {
    flex: 1;
}

.bullets {
    list-style: none;
    padding: 14px 0 0 23px;
    font-family: "DejaVu Sans", sans-serif;
    font-size: 10.7px;
    line-height: 12.7px;
    color: #111;
    white-space: nowrap;
}

.bullets li {
    position: relative;
}

.bullets li::before {
    content: "\2794";
    position: absolute;
    left: -16px;
    top: 0;
    font-weight: 700;
    font-size: 10px;
}

.figures {
    display: flex;
    gap: 26px;
    margin: 28px 0 0 11px;
}

.fig-title {
    height: 13px;
    margin-bottom: 8px;
    font-family: "DejaVu Sans", sans-serif;
    font-size: 9.5px;
    font-weight: 700;
    line-height: 13px;
    text-align: center;
}

.fig-title-1 { padding-right: 52px; }
.fig-title-2 { padding-left: 60px; }

.risk-top,
.risk-bottom,
.objectives {
    font-family: "DejaVu Sans", sans-serif;
    text-align: center;
}

.risk-top {
    display: grid;
    grid-template-columns: 42px 46px 80px 83px 79px 85px;
    grid-template-rows: 65px 65px 64px 60px;
    gap: 1px;
    width: 424px;
    background: #000;
    border: 2px solid #000;
    border-bottom-width: 1px;
    font-size: 11px;
    font-weight: 700;
    line-height: 14.5px;
}

.risk-top > div {
    display: flex;
    align-items: center;
    justify-content: center;
    padding: 0 4px;
}

.prob-side {
    grid-row: span 4;
    background: #fff;
}

.prob-side span {
    writing-mode: vertical-rl;
    font-family: "Liberation Sans", Arial, sans-serif;
    font-size: 14px;
    font-weight: 400;
    white-space: nowrap;
}

.prob-label {
    background: #ddd;
    color: #666;
    font-weight: 400;
}

.prob-label span {
    writing-mode: vertical-rl;
    white-space: nowrap;
}

.cell-watch { background: #99cc00; }
.cell-eval { background: #ff9933; }
.cell-urgent { background: #ff0000; }

.risk-bottom {
    display: grid;
    grid-template-columns: 80px 83px 79px 85px;
    grid-template-rows: 40px 40px;
    gap: 1px;
    width: 334px;
    margin-left: 90px;
    background: #555;
    border: 2px solid #000;
    border-top: 0;
    font-size: 11.5px;
    color: #666;
}

.risk-bottom > div {
    display: flex;
    align-items: center;
    justify-content: center;
    background: #ddd;
}

.risk-bottom .impact-axis {
    grid-column: span 4;
    background: #fff;
    color: #222;
    font-size: 12px;
}

.objectives {
    display: grid;
    grid-template-columns: 130px 106px 124px 104px 99px;
    grid-template-rows: 50px 72px 72px 72px 69px;
    gap: 2px;
    width: 575px;
    background: #000;
    border: 2px solid #000;
    font-size: 11.8px;
    line-height: 16px;
    color: #444;
}

.objectives > div {
    display: flex;
    align-items: center;
    justify-content: center;
    padding: 0 3px;
    background: #fff;
}

.objectives > .obj-corner,
.objectives > .obj-name,
.objectives > .obj-head {
    background: #ddd;
    color: #222;
    font-size: 11px;
    font-weight: 700;
}

.objectives > .obj-corner {
    align-items: flex-end;
    padding-bottom: 4px;
    white-space: nowrap;
    font-size: 10.5px;
}

.objectives > .obj-head {
    align-items: flex-start;
    padding-top: 17px;
}
```
